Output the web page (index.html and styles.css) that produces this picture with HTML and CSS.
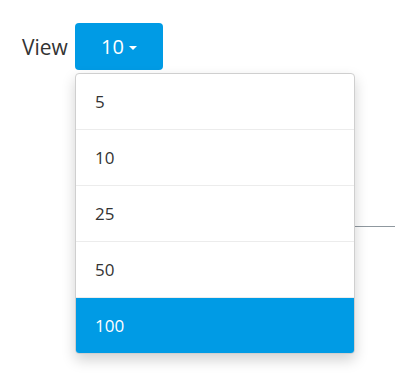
FILE: index.html
```html
<!DOCTYPE html>
<html>
<head>
<meta charset="utf-8">
<link rel="stylesheet" href="styles.css">
</head>
<body>
<div class="page">
  <div class="toolbar">
    <span class="label">View</span>
    <div class="dropdown">
      <button class="btn">10 <span class="caret"></span></button>
      <ul class="menu">
        <li class="item">5</li>
        <li class="item">10</li>
        <li class="item">25</li>
        <li class="item">50</li>
        <li class="item active">100</li>
      </ul>
    </div>
  </div>
  <div class="rule"></div>
</div>
</body>
</html>
```
FILE: styles.css
```css
html, body {
  margin: 0;
  padding: 0;
  background: #fff;
  font-family: "Open Sans", "Liberation Sans", sans-serif;
}
.page {
  position: relative;
  width: 395px;
  height: 382px;
  overflow: hidden;
}
.toolbar {
  display: flex;
  align-items: center;
  padding: 23px 0 0 22px;
}
.label {
  width: 53px;
  font-size: 21px;
  color: #333;
}
.dropdown {
  position: relative;
}
.btn {
  display: flex;
  align-items: center;
  justify-content: center;
  width: 88px;
  height: 47px;
  border: 0;
  border-radius: 4px;
  background: #009be5;
  color: #fff;
  font-family: "Open Sans", "Liberation Sans", sans-serif;
  font-size: 20px;
  padding: 0;
  gap: 5px;
}
.caret {
  width: 0;
  height: 0;
  border-left: 4px solid transparent;
  border-right: 4px solid transparent;
  border-top: 4px solid #fff;
  margin-top: 2px;
}
.menu {
  position: absolute;
  top: 50px;
  left: 0;
  width: 278px;
  margin: 0;
  padding: 0;
  list-style: none;
  background: #fff;
  border: 1px solid #cfcfcf;
  border-radius: 4px;
  box-shadow: 0 6px 14px rgba(0, 0, 0, 0.18);
  overflow: hidden;
  z-index: 2;
}
.item {
  height: 55px;
  display: flex;
  align-items: center;
  padding-left: 19px;
  font-size: 17px;
  color: #333;
  border-bottom: 1px solid #ececec;
}
.item.active {
  background: #009be5;
  color: #fff;
  border-bottom: 0;
  height: 55px;
}
.rule {
  position: absolute;
  top: 226px;
  left: 200px;
  right: 0;
  height: 1px;
  background: #8f989f;
}
```
